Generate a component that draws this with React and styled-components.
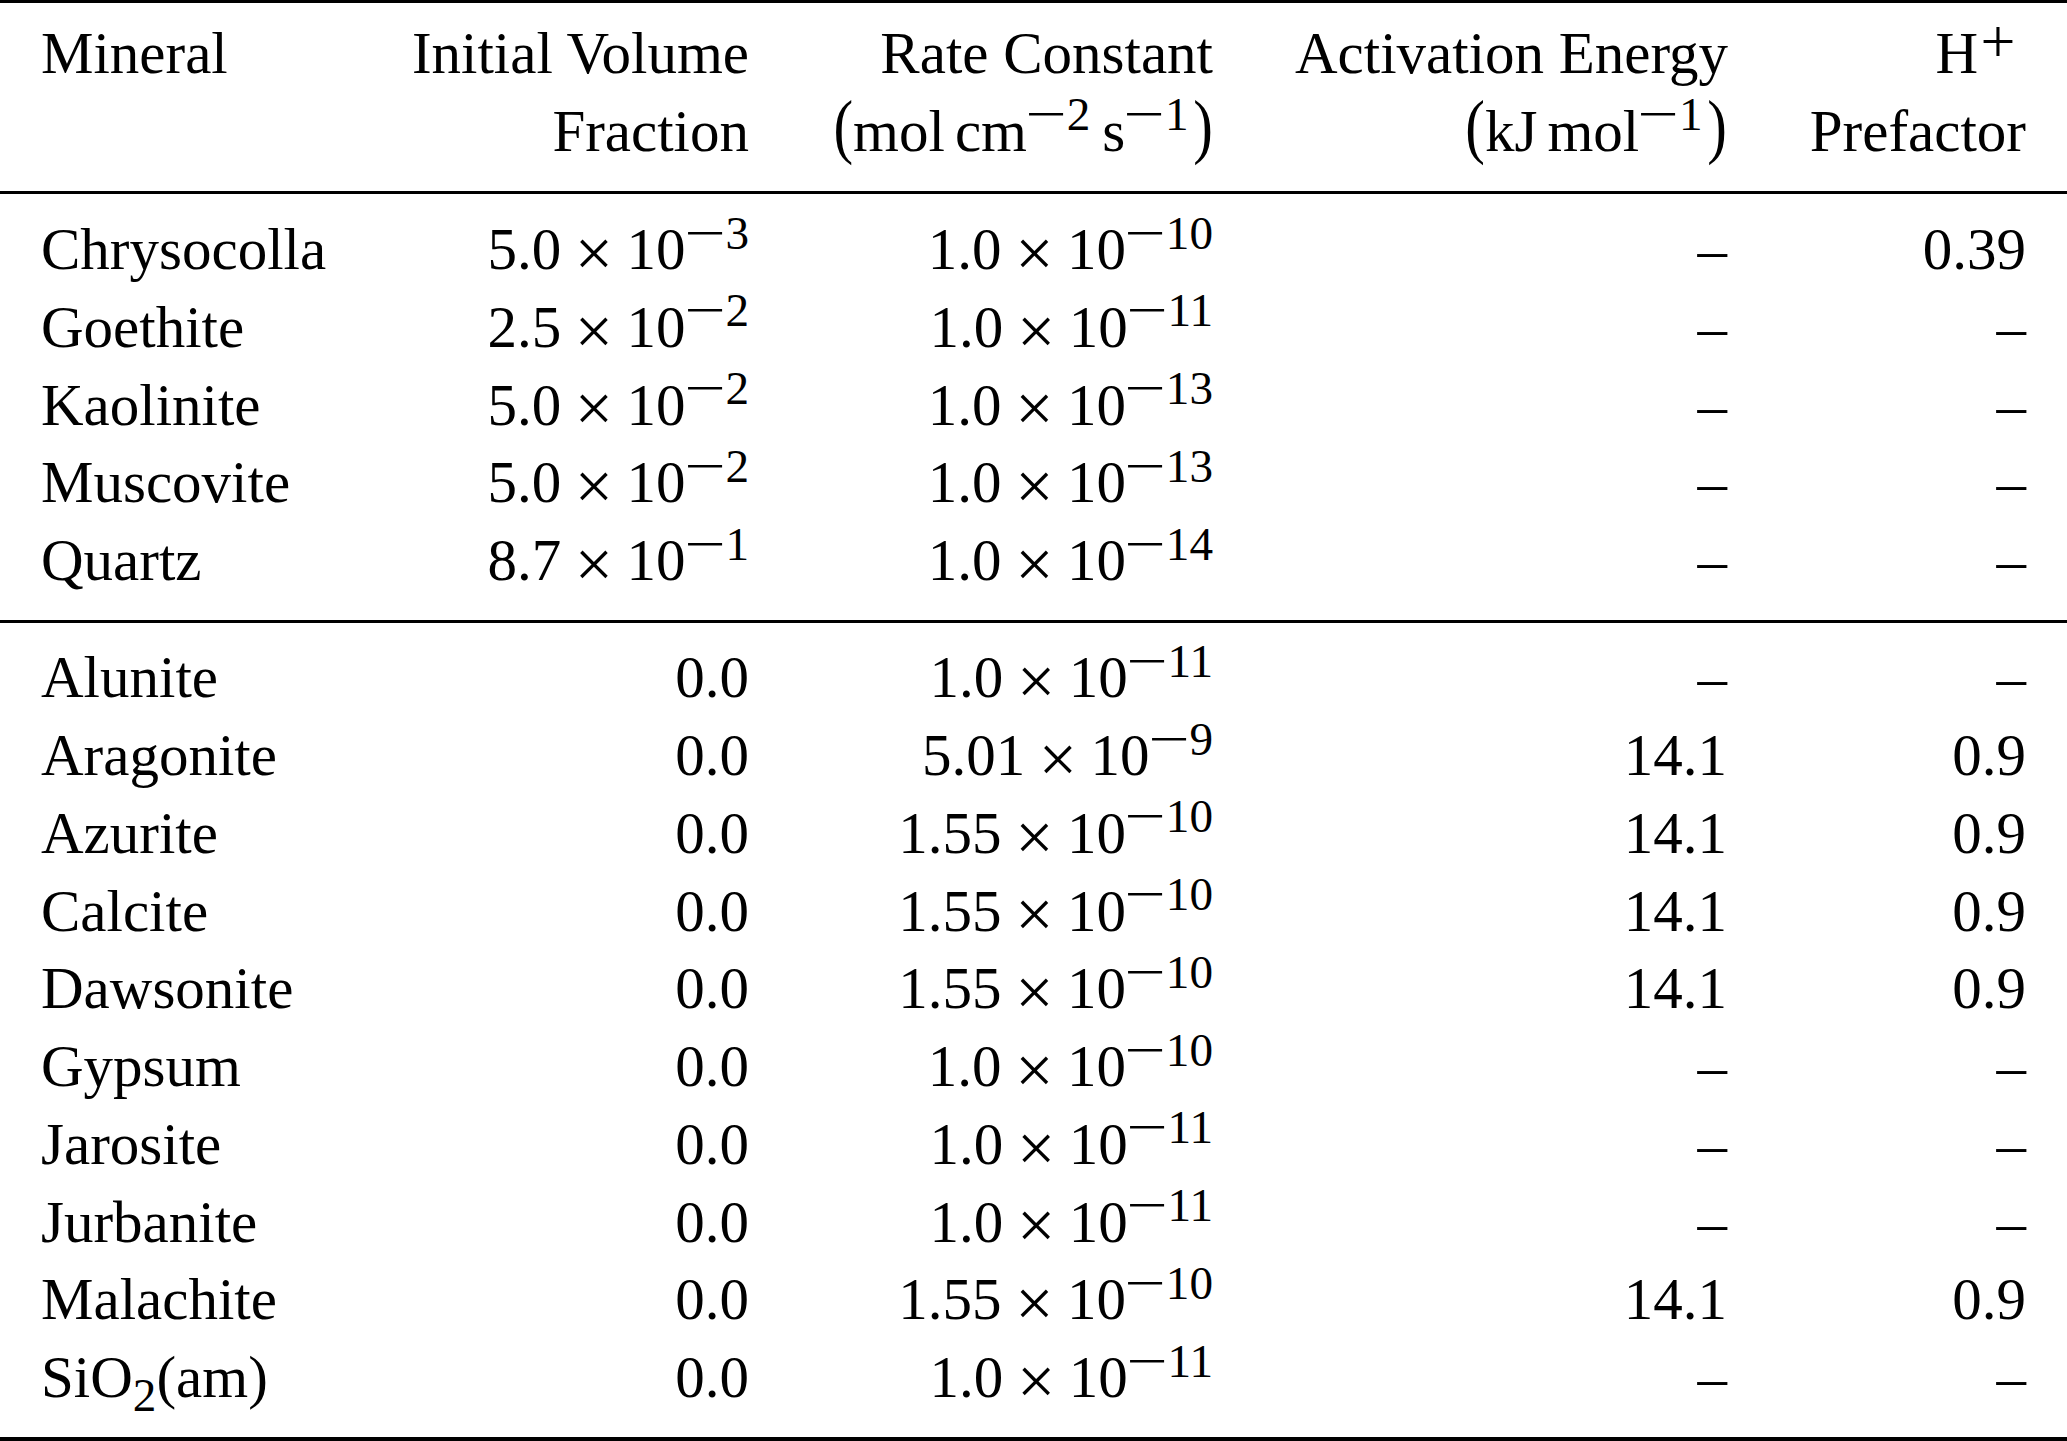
import React from 'react';
import styled, { createGlobalStyle } from 'styled-components';

const Global = createGlobalStyle`
  html, body { margin: 0; padding: 0; background: #ffffff; }
  body { font-family: "Liberation Serif", "Times New Roman", serif; color: #000000; }
`;

const COLS = '287px 339px 382px 432px 217px';

const Table = styled.div`
  width: 2067px;
  box-sizing: border-box;
  border-top: 3px solid #000;
  border-bottom: 4px solid #000;
  font-size: 59px;
  line-height: 77.75px;
`;

const Row = styled.div`
  display: grid;
  grid-template-columns: ${COLS};
  column-gap: 82px;
  padding: 0 41px;
`;

const Head = styled(Row)`
  padding-top: 12px;
  padding-bottom: 20.5px;
  border-bottom: 3px solid #000;
`;

const Section = styled.div`
  padding-top: ${(p) => p.$top}px;
  padding-bottom: ${(p) => p.$bottom}px;
  border-bottom: ${(p) => (p.$rule ? '3px solid #000' : 'none')};
`;

const Cell = styled.div`
  text-align: ${(p) => (p.$left ? 'left' : 'right')};
  white-space: nowrap;
`;

const Line = styled.span`
  display: block;
`;

const Sup = styled.span`
  font-size: 0.8em;
  line-height: 0;
  position: relative;
  top: -0.43em;
`;

const Plus = styled.span`
  font-size: 1.05em;
  line-height: 0;
  position: relative;
  top: -0.18em;
  margin: 0 0.17em 0 0.04em;
`;

const Sub = styled.span`
  font-size: 0.8em;
  line-height: 0;
  position: relative;
  top: 0.3em;
`;

const Minus = styled.span`
  display: inline-block;
  transform: scaleX(1.55);
  margin: 0 0.15em 0 0.13em;
`;

const Cross = styled.span`
  font-size: 1.15em;
  line-height: 0;
  position: relative;
  top: 0.1em;
  margin: 0 0.2em;
`;

const Paren = styled.span`
  display: inline-block;
  transform: scaleY(1.22);
  transform-origin: 50% 78%;
`;

const Thin = styled.span`
  display: inline-block;
  width: ${(p) => p.$w || '0.2em'};
`;

const Sci = ({ m, e }) => (
  <>
    {m}
    <Cross>×</Cross>10
    <Sup>
      <Minus>−</Minus>
      {e}
    </Sup>
  </>
);

const DASH = '–';

const top = [
  ['Chrysocolla', ['5.0', '3'], ['1.0', '10'], DASH, '0.39'],
  ['Goethite', ['2.5', '2'], ['1.0', '11'], DASH, DASH],
  ['Kaolinite', ['5.0', '2'], ['1.0', '13'], DASH, DASH],
  ['Muscovite', ['5.0', '2'], ['1.0', '13'], DASH, DASH],
  ['Quartz', ['8.7', '1'], ['1.0', '14'], DASH, DASH],
];

const bottom = [
  ['Alunite', '0.0', ['1.0', '11'], DASH, DASH],
  ['Aragonite', '0.0', ['5.01', '9'], '14.1', '0.9'],
  ['Azurite', '0.0', ['1.55', '10'], '14.1', '0.9'],
  ['Calcite', '0.0', ['1.55', '10'], '14.1', '0.9'],
  ['Dawsonite', '0.0', ['1.55', '10'], '14.1', '0.9'],
  ['Gypsum', '0.0', ['1.0', '10'], DASH, DASH],
  ['Jarosite', '0.0', ['1.0', '11'], DASH, DASH],
  ['Jurbanite', '0.0', ['1.0', '11'], DASH, DASH],
  ['Malachite', '0.0', ['1.55', '10'], '14.1', '0.9'],
  [
    <>
      SiO<Sub>2</Sub>(am)
    </>,
    '0.0',
    ['1.0', '11'],
    DASH,
    DASH,
  ],
];

const val = (v) => (Array.isArray(v) ? <Sci m={v[0]} e={v[1]} /> : v);

const DataRow = ({ r }) => (
  <Row>
    <Cell $left>{r[0]}</Cell>
    <Cell>{val(r[1])}</Cell>
    <Cell>{val(r[2])}</Cell>
    <Cell>{val(r[3])}</Cell>
    <Cell>{val(r[4])}</Cell>
  </Row>
);

export default function App() {
  return (
    <>
      <Global />
      <Table>
        <Head>
          <Cell $left>Mineral</Cell>
          <Cell>
            <Line>Initial Volume</Line>
            <Line>Fraction</Line>
          </Cell>
          <Cell>
            <Line>Rate Constant</Line>
            <Line>
              <Paren>(</Paren>mol<Thin $w="0.17em" />cm
              <Sup>
                <Minus>−</Minus>2
              </Sup>
              <Thin />s
              <Sup>
                <Minus>−</Minus>1
              </Sup>
              <Thin $w="0.08em" />
              <Paren>)</Paren>
            </Line>
          </Cell>
          <Cell>
            <Line>Activation Energy</Line>
            <Line>
              <Paren>(</Paren>kJ<Thin $w="0.17em" />mol
              <Sup>
                <Minus>−</Minus>1
              </Sup>
              <Thin $w="0.08em" />
              <Paren>)</Paren>
            </Line>
          </Cell>
          <Cell>
            <Line>
              H<Plus>+</Plus>
            </Line>
            <Line>Prefactor</Line>
          </Cell>
        </Head>
        <Section $top={17} $bottom={20.5} $rule>
          {top.map((r, i) => (
            <DataRow key={i} r={r} />
          ))}
        </Section>
        <Section $top={16} $bottom={20.5}>
          {bottom.map((r, i) => (
            <DataRow key={i} r={r} />
          ))}
        </Section>
      </Table>
    </>
  );
}
